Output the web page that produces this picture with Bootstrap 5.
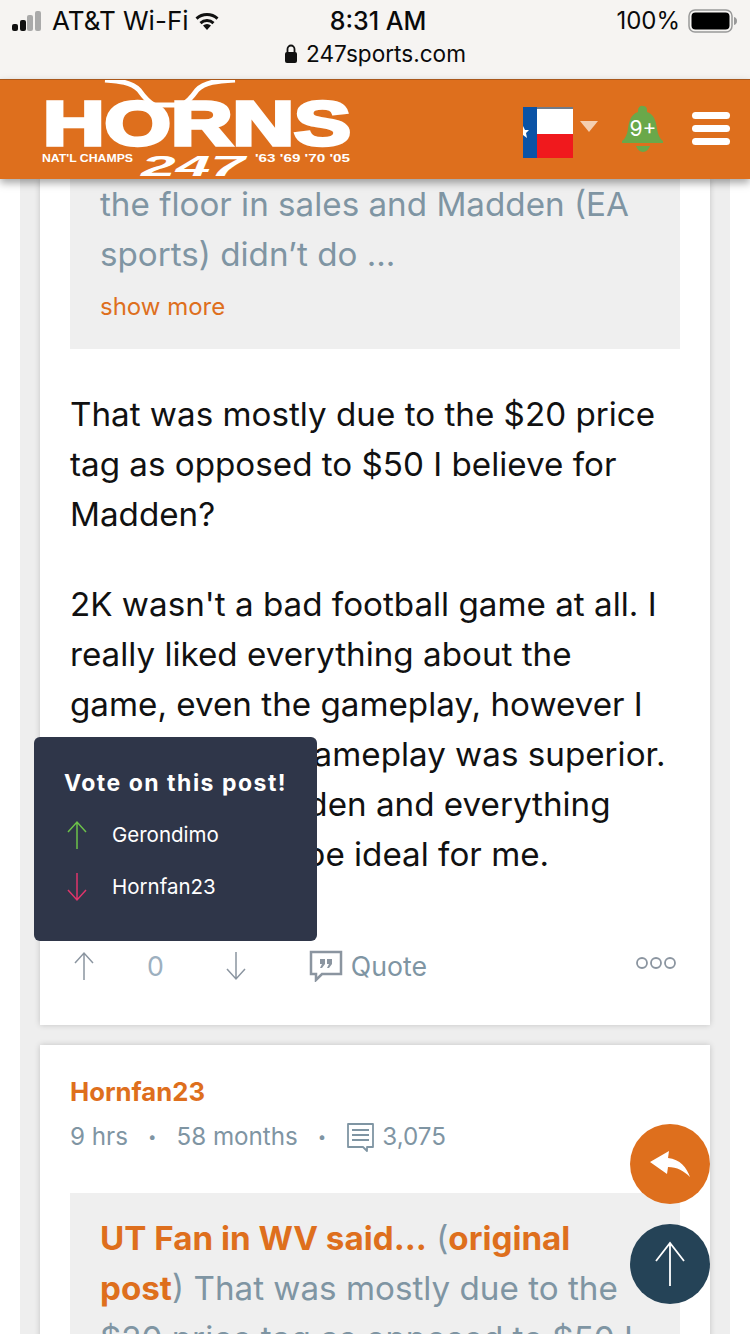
<!DOCTYPE html>
<html lang="en"><head><meta charset="utf-8">
<link rel="stylesheet" href="https://cdn.jsdelivr.net/npm/bootstrap@5.3.0/dist/css/bootstrap.min.css">
<style>
html,body{height:1334px;overflow:hidden;background:#fff}
body{font-family:Inter,"Liberation Sans",sans-serif;color:#111;position:relative;width:750px}
.statusarea{height:79px;background:#f6f4f2;font-family:Inter,"Liberation Sans",sans-serif;color:#0a0a0a;font-size:24px;line-height:30px;padding:6px 12px 0 12px}
.statusrow{height:30px}
.statusside{flex:1 1 0}
.carriername{font-size:26px}
.clocktext{font-size:25px;font-weight:500;margin-left:6px}
.urlrow{font-size:22.600px;line-height:30px;margin-top:3px}
.sitehead{height:100px;background:#de6f1d;border-top:1px solid #a9581c;box-shadow:0 4px 8px rgba(0,0,0,.35);position:relative;z-index:5;padding:0 20px 0 40px}
.logoart{width:320px;height:99px;display:block}
.frameband{background:#eee;margin:0 20px;padding:0 20px;height:1155px}
.postbox{background:#fff;box-shadow:0 0 6px rgba(0,0,0,.18);padding:0 30px}
.postone{height:846px}
.posttwo{margin-top:20px;height:400px;padding-top:27px}
.quotebox{background:#efefef;padding:0 30px;color:#7f95a3;font-size:33.200px;line-height:50px}
.quoteone{height:170px}
.quotetwo{padding-top:20px}
.moreword{color:#de6f1d;font-size:24px;line-height:30px;display:block;margin-top:13px}
.bodytext{font-size:33.200px;line-height:50px;margin:40px 0 0}
.actionline{color:#7f95a3;font-size:26.700px;line-height:32px;margin-top:69px;height:36px}
.uparrow{margin-left:3px}
.zerovalue{margin-left:52px;color:#9db0bf}
.downgap{margin-left:61px}
.quotegap{margin-left:62px}
.moredots{margin-top:-6px;margin-right:3px}
.author{color:#de6f1d;font-weight:700;font-size:25.700px;line-height:40px}
.metaline{color:#7f95a3;font-size:24.200px;line-height:36px;margin-top:7px;margin-bottom:38px}
.dotsep{font-size:15px;margin:0 20px}
.quotename{color:#de6f1d;font-weight:700}
.voteflyout{position:absolute;left:34px;top:737px;width:283px;height:204px;background:#2f3649;border-radius:6px;color:#fff;z-index:4;padding:30px}
.votetitle{font-weight:700;font-size:23px;line-height:32px;letter-spacing:1.500px;white-space:nowrap;margin-bottom:10px}
.voterow{font-size:20.500px;line-height:30px;gap:25px;height:52px;margin-left:3px}
.floatcircle{position:absolute;left:630px;width:80px;height:80px;border-radius:50%;z-index:6}
.replyfloat{top:1124px;background:#de6f1d}
.topfloat{top:1224px;background:#254357}
.bellicon{margin-top:24px}
.menulines{margin-top:32px;margin-left:28px;gap:6px;width:38px}
.menubar{height:7px}
</style></head><body>
<div class="statusarea">
  <div class="statusrow d-flex align-items-center">
    <div class="statusside d-flex align-items-center">
      <svg width="36" height="24" viewBox="0 0 36 24" class="me-1"><rect x="0" y="15" width="6" height="7" rx="2" fill="#111"/><rect x="8" y="11" width="6" height="11" rx="2" fill="#111"/><rect x="15" y="6" width="6" height="16" rx="2" fill="#aaa"/><rect x="23" y="2" width="6" height="20" rx="2" fill="#aaa"/></svg>
      <span class="carriername">AT&amp;T Wi-Fi</span>
      <svg width="28" height="22" viewBox="0 0 28 22" class="ms-1"><path d="M14 20l-4-4.500a6 6 0 0 1 8 0zM6.500 12a11 11 0 0 1 15 0l-2 2.200a8 8 0 0 0-11 0zM2.500 7.500a17 17 0 0 1 23 0l-2 2.200a14 14 0 0 0-19 0z" fill="#111"/></svg>
    </div>
    <span class="clocktext">8:31 AM</span>
    <div class="statusside d-flex align-items-center justify-content-end gap-2">
      <span>100%</span>
      <svg width="50" height="24" viewBox="0 0 50 24"><rect x="1" y="1" width="43" height="22" rx="6" fill="none" stroke="#999" stroke-width="1.500"/><rect x="3.500" y="3.500" width="38" height="17" rx="4" fill="#000"/><path d="M46 8c2 .5 3 2 3 4s-1 3.500-3 4z" fill="#999"/></svg>
    </div>
  </div>
  <div class="urlrow d-flex justify-content-center align-items-center gap-2">
    <svg width="14" height="20" viewBox="0 0 14 20"><rect x="1" y="8" width="12" height="11" rx="2" fill="#111"/><path d="M3.500 9V5a3.500 3.500 0 0 1 7 0v4" fill="none" stroke="#111" stroke-width="1.800"/></svg>
    <span>247sports.com</span>
  </div>
</div>
<header class="sitehead d-flex justify-content-between align-items-start">
  <svg class="logoart" viewBox="0 0 320 99">
    <path d="M65 0c14 1 26 2 34 10 5 7 9 12 15 15h28c6-3 10-8 15-15 8-8 20-9 38-10" fill="none" stroke="#fff" stroke-width="5"/>
    <text x="3" y="65" textLength="308" lengthAdjust="spacingAndGlyphs" font-family="Liberation Sans" font-weight="700" font-size="63" fill="#fff" stroke="#fff" stroke-width="3.500">HORNS</text>
    <text x="2" y="82" textLength="91" lengthAdjust="spacingAndGlyphs" font-family="Liberation Sans" font-weight="700" font-size="11" fill="#fff">NAT'L CHAMPS</text>
    <text x="101" y="96" textLength="104" lengthAdjust="spacingAndGlyphs" font-family="Liberation Sans" font-weight="700" font-style="italic" font-size="30" fill="#fff">247</text>
    <text x="215" y="82" textLength="95" lengthAdjust="spacingAndGlyphs" font-family="Liberation Sans" font-weight="700" font-size="11" fill="#fff">'63 '69 '70 '05</text>
  </svg>
  <div class="d-flex align-items-start">
    <svg width="76" height="99" viewBox="0 0 76 99"><rect x="1" y="27" width="50" height="51" fill="#fff"/><rect x="1" y="27" width="50" height="2" fill="#707a88"/><rect x="15" y="54" width="36" height="24" fill="#f0191d"/><rect x="1" y="27" width="14" height="51" fill="#0b53a6"/><path d="M1 46l2 4h4l-3 3 1 5-4-3z" fill="#fff"/><path d="M58 41h18l-9 11z" fill="#f5cfb0"/></svg>
    <svg width="42" height="60" viewBox="0 0 42 60" class="ms-4 bellicon">
      <path d="M21 2a4 4 0 0 1 4 4v2c7 2 9 9 10 17 1 6 3 10 6 12v2H0v-2c3-2 5-6 6-12 1-8 3-15 10-17V6a4 4 0 0 1 5-4z" fill="#6aa84a"/><path d="M14 42h14c-1 3-4 6-7 6s-6-3-7-6z" fill="#6aa84a"/>
      <text x="21" y="32" text-anchor="middle" font-family="Inter" font-size="21" fill="#fff">9+</text>
    </svg>
    <div class="d-flex flex-column menulines">
      <span class="d-block bg-white rounded-1 menubar"></span>
      <span class="d-block bg-white rounded-1 menubar"></span>
      <span class="d-block bg-white rounded-1 menubar"></span>
    </div>
  </div>
</header>
<main class="frameband overflow-hidden">
  <article class="postbox postone">
    <div class="quotebox quoteone"><div>the floor in sales and Madden (EA<br>sports) didn’t do ...</div><a class="moreword text-decoration-none">show more</a></div>
    <p class="bodytext">That was mostly due to the $20 price<br>tag as opposed to $50 I believe for<br>Madden?</p>
    <p class="bodytext">2K wasn't a bad football game at all. I<br>really liked everything about the<br>game, even the gameplay, however I<br>think Madden gameplay was superior.<br>Mix of 2K, Madden and everything<br>else, it&nbsp; should be ideal for me.</p>
    <div class="actionline d-flex align-items-center">
      <svg width="22" height="30" viewBox="0 0 22 30" class="uparrow"><path d="M11 29V2M2 12l9-10 9 10" fill="none" stroke="#8b95a0" stroke-width="1.500"/></svg>
      <span class="zerovalue">0</span>
      <svg width="22" height="30" viewBox="0 0 22 30" class="downgap"><path d="M11 1v27M2 18l9 10 9-10" fill="none" stroke="#8b95a0" stroke-width="1.500"/></svg>
      <svg width="34" height="32" viewBox="0 0 34 32" class="quotegap"><path d="M2 2h30v22H13l-6 6v-6H2z" fill="none" stroke="#8b95a0" stroke-width="2.500"/><path d="M11 9h5v5l-3 4h-2l2-4h-2zM18 9h5v5l-3 4h-2l2-4h-2z" fill="#8b95a0"/></svg>
      <span class="ms-2">Quote</span>
      <svg width="42" height="14" viewBox="0 0 42 14" class="ms-auto moredots"><g fill="none" stroke="#8b95a0" stroke-width="1.800"><circle cx="7" cy="7" r="5"/><circle cx="21" cy="7" r="5"/><circle cx="35" cy="7" r="5"/></g></svg>
    </div>
  </article>
  <article class="postbox posttwo">
    <div class="author">Hornfan23</div>
    <div class="metaline d-flex align-items-center">
      <span>9 hrs</span><span class="dotsep">•</span><span>58 months</span><span class="dotsep">•</span>
      <svg width="28" height="30" viewBox="0 0 28 30" class="me-2"><path d="M2 2h25v23h-6v4l-4-4H2z" fill="none" stroke="#7f95a3" stroke-width="1.800" stroke-linejoin="round"/><path d="M6 8h17M6 13h17M6 18h17" stroke="#7f95a3" stroke-width="1.800"/></svg>
      <span>3,075</span>
    </div>
    <div class="quotebox quotetwo"><span class="quotename">UT Fan in WV said...</span> (<span class="quotename">original<br>post</span>) That was mostly due to the<br>$20 price tag as opposed to $50 I</div>
  </article>
</main>
<aside class="voteflyout">
  <div class="votetitle">Vote on this post!</div>
  <div class="voterow d-flex align-items-center">
    <svg width="20" height="30" viewBox="0 0 20 30"><path d="M10 29V2M1 12l9-10 9 10" fill="none" stroke="#6cc24a" stroke-width="1.500"/></svg><span>Gerondimo</span>
  </div>
  <div class="voterow d-flex align-items-center">
    <svg width="20" height="30" viewBox="0 0 20 30"><path d="M10 1v27M1 18l9 10 9-10" fill="none" stroke="#e0356b" stroke-width="1.500"/></svg><span>Hornfan23</span>
  </div>
</aside>
<div class="floatcircle replyfloat d-flex align-items-center justify-content-center">
  <svg width="40" height="26" viewBox="0 0 40 26"><path d="M0 11L19 0l-1 7c12 1 19 10 22 19-6-6-13-10-22-10l-1 7z" fill="#fff"/></svg>
</div>
<div class="floatcircle topfloat d-flex align-items-center justify-content-center">
  <svg width="32" height="46" viewBox="0 0 32 46"><path d="M16 45V2M2 20L16 2l14 18" fill="none" stroke="#fff" stroke-width="1.800"/></svg>
</div>
<script src="https://cdn.jsdelivr.net/npm/bootstrap@5.3.0/dist/js/bootstrap.bundle.min.js"></script>
</body></html>
